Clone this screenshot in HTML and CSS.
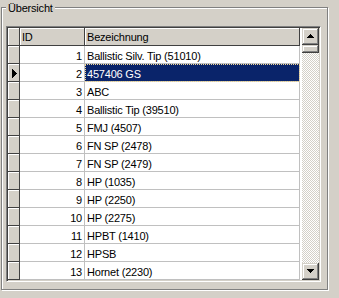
FILE: index.html
```html
<!DOCTYPE html>
<html>
<head>
<meta charset="utf-8">
<link rel="stylesheet" href="styles.css">
</head>
<body>
<div class="group">
  <div class="legend">Übersicht</div>
  <div class="grid">
    <div class="table">
      <div class="row head">
        <div class="ind"></div>
        <div class="h id">ID</div>
        <div class="h name">Bezeichnung</div>
        <div class="fill"></div>
      </div>
      <div class="row"><div class="ind"></div><div class="c id">1</div><div class="c name">Ballistic Silv. Tip (51010)</div><div class="fill"></div></div>
      <div class="row"><div class="ind"><svg width="5" height="9" viewBox="0 0 5 9" shape-rendering="crispEdges"><rect x="0" y="0" width="1" height="9"/><rect x="1" y="1" width="1" height="7"/><rect x="2" y="2" width="1" height="5"/><rect x="3" y="3" width="1" height="3"/><rect x="4" y="4" width="1" height="1"/></svg></div><div class="c id">2</div><div class="c name sel">457406 GS</div><div class="fill"></div></div>
      <div class="row"><div class="ind"></div><div class="c id">3</div><div class="c name">ABC</div><div class="fill"></div></div>
      <div class="row"><div class="ind"></div><div class="c id">4</div><div class="c name">Ballistic Tip (39510)</div><div class="fill"></div></div>
      <div class="row"><div class="ind"></div><div class="c id">5</div><div class="c name">FMJ (4507)</div><div class="fill"></div></div>
      <div class="row"><div class="ind"></div><div class="c id">6</div><div class="c name">FN SP (2478)</div><div class="fill"></div></div>
      <div class="row"><div class="ind"></div><div class="c id">7</div><div class="c name">FN SP (2479)</div><div class="fill"></div></div>
      <div class="row"><div class="ind"></div><div class="c id">8</div><div class="c name">HP (1035)</div><div class="fill"></div></div>
      <div class="row"><div class="ind"></div><div class="c id">9</div><div class="c name">HP (2250)</div><div class="fill"></div></div>
      <div class="row"><div class="ind"></div><div class="c id">10</div><div class="c name">HP (2275)</div><div class="fill"></div></div>
      <div class="row"><div class="ind"></div><div class="c id">11</div><div class="c name">HPBT (1410)</div><div class="fill"></div></div>
      <div class="row"><div class="ind"></div><div class="c id">12</div><div class="c name">HPSB</div><div class="fill"></div></div>
      <div class="row"><div class="ind"></div><div class="c id">13</div><div class="c name">Hornet (2230)</div><div class="fill"></div></div>
    </div>
    <div class="vscroll">
      <div class="sbtn"><svg width="7" height="4" viewBox="0 0 7 4" shape-rendering="crispEdges"><rect x="3" y="0" width="1" height="1"/><rect x="2" y="1" width="3" height="1"/><rect x="1" y="2" width="5" height="1"/><rect x="0" y="3" width="7" height="1"/></svg></div>
      <div class="thumb"></div>
      <div class="track"></div>
      <div class="sbtn"><svg width="7" height="4" viewBox="0 0 7 4" shape-rendering="crispEdges"><rect x="0" y="0" width="7" height="1"/><rect x="1" y="1" width="5" height="1"/><rect x="2" y="2" width="3" height="1"/><rect x="3" y="3" width="1" height="1"/></svg></div>
    </div>
  </div>
</div>
</body>
</html>
```

FILE: styles.css
```css
html, body {
  margin: 0;
  padding: 0;
  background: #d4d0c8;
}
body {
  width: 339px;
  height: 298px;
  overflow: hidden;
  font-family: "Liberation Sans", Arial, sans-serif;
  font-size: 11px;
  letter-spacing: -0.2px;
  color: #000;
}
.group {
  position: relative;
  box-sizing: border-box;
  margin: 7px 0 0 1px;
  width: 327px;
  height: 283px;
  border: 1px solid #808080;
  box-shadow: 1px 1px 0 #fff, inset 1px 1px 0 #fff;
  padding: 18px 0 0 4px;
}
.legend {
  position: absolute;
  top: -8px;
  left: 4px;
  padding: 0 2px;
  line-height: 16px;
  background: #d4d0c8;
}
.grid {
  display: flex;
  box-sizing: border-box;
  width: 315px;
  height: 256px;
  border-style: solid;
  border-width: 1px;
  border-color: #808080 #fff #fff #808080;
  box-shadow: inset 1px 1px 0 #404040, inset -1px -1px 0 #d4d0c8;
  padding: 1px;
}
.table {
  width: 294px;
  display: flex;
  flex-direction: column;
  background: #fff;
}
.row {
  display: flex;
  height: 18px;
}
.ind {
  box-sizing: border-box;
  width: 12px;
  background: #d4d0c8;
  border-right: 1px solid #404040;
  border-bottom: 1px solid #404040;
  box-shadow: inset 1px 1px 0 #fff;
  padding: 5px 0 0 4px;
}
.ind svg {
  display: block;
}
.h, .c {
  box-sizing: border-box;
  white-space: nowrap;
  overflow: hidden;
  padding: 0 2px;
}
.h {
  background: #d4d0c8;
  border-right: 1px solid #404040;
  border-bottom: 1px solid #404040;
  box-shadow: inset 1px 1px 0 #fff;
  line-height: 18px;
}
.c {
  border-right: 1px solid #c0c0c0;
  border-bottom: 1px solid #c0c0c0;
  padding-top: 1px;
  line-height: 18px;
}
.id {
  width: 65px;
}
.c.id {
  text-align: right;
  padding-right: 2px;
}
.name {
  width: 215px;
}
.fill {
  width: 2px;
  background: #fff;
}
.sel {
  background: #0a246a;
  color: #fff;
  outline: 1px dotted #f5db95;
  outline-offset: -1px;
}
.vscroll {
  width: 17px;
  display: flex;
  flex-direction: column;
}
.sbtn, .thumb {
  box-sizing: border-box;
  background: #d4d0c8;
  box-shadow: inset -1px -1px 0 #404040, inset 1px 1px 0 #d4d0c8, inset -2px -2px 0 #808080, inset 2px 2px 0 #fff;
}
.sbtn {
  height: 17px;
  display: flex;
  align-items: center;
  justify-content: center;
}
.sbtn svg {
  display: block;
  margin: 0 1px 1px 0;
}
.thumb {
  height: 8px;
}
.track {
  flex: 1;
  background: repeating-conic-gradient(#d4d0c8 0 25%, #fff 0 50%) 0 0 / 2px 2px;
}
```
